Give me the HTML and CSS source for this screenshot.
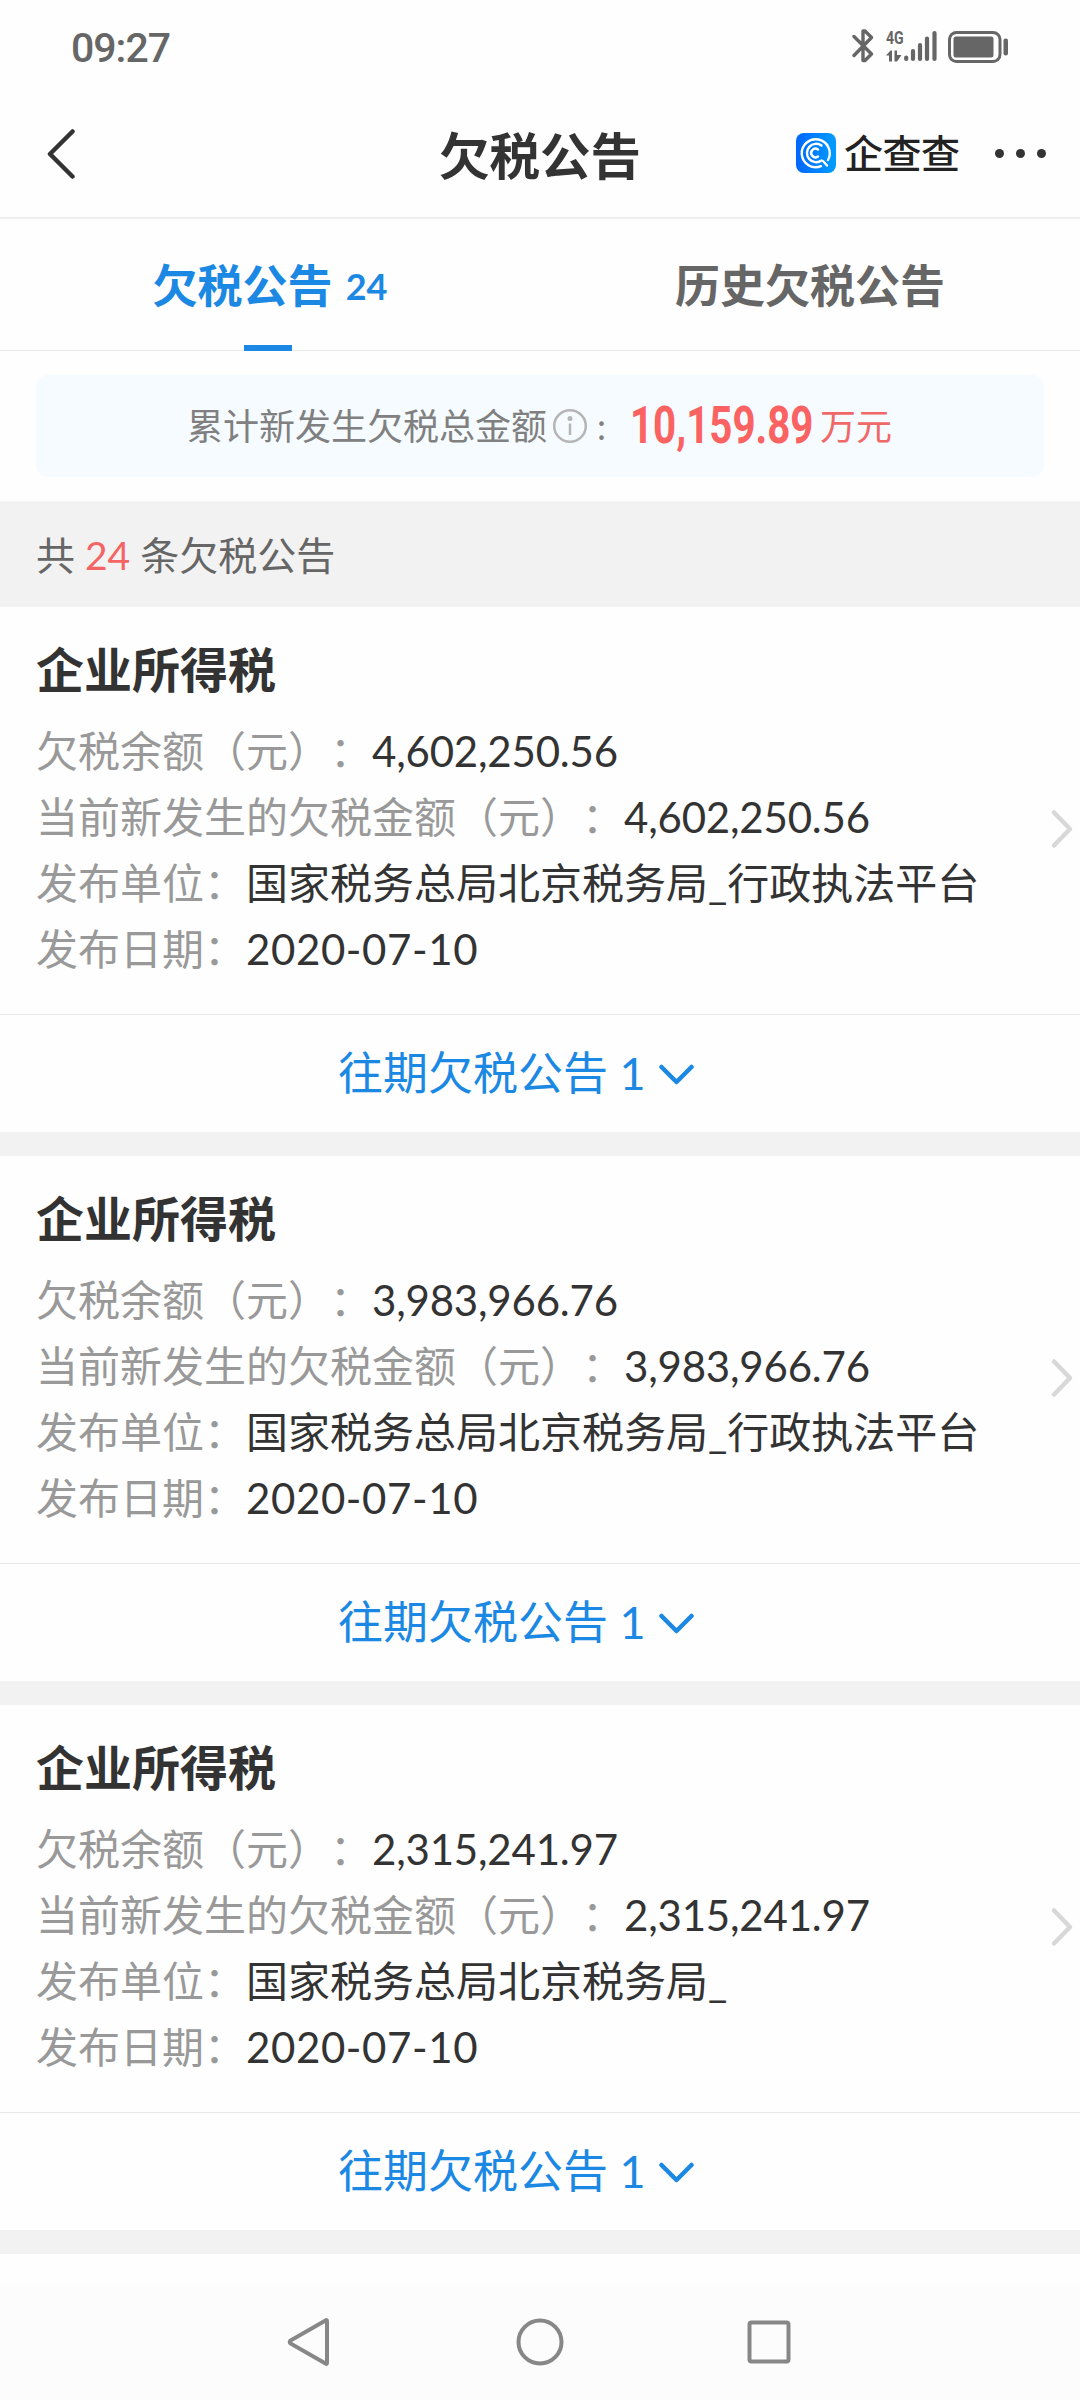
FILE: index.html
```
<!DOCTYPE html>
<html lang="zh-CN">
<head>
  <meta charset="UTF-8" />
  <meta name="viewport" content="width=device-width, initial-scale=1.0" />
  <title>欠税公告</title>
  <link rel="stylesheet" href="styles.css">
</head>
<body>
  <div class="status-bar">
    <span class="time">09:27</span>
    <div class="status-icons">
      <svg class="bluetooth" width="22" height="35" viewBox="0 0 22 35" fill="none" stroke="#666" stroke-width="3.400" stroke-linecap="round" stroke-linejoin="round">
        <path d="M2 8.500L19.500 26L13 32.500H11V21M2 27.500L19.500 9.500L13 3H11V15"/>
      </svg>
      <div class="network">
        <span>4G</span>
        <svg width="16" height="12" viewBox="0 0 16 12" fill="#666">
          <path d="M6 11.500H3V5.500H0L4.500 .5H6zM8.500 .5H11V5H15.500L11 11.500H8.500z"/>
        </svg>
      </div>
      <svg class="signal" width="33" height="34" viewBox="0 0 33 34" stroke="#666" stroke-width="4.200" stroke-linecap="round">
        <path d="M2.200 29.500V31M9 23V31M16 17V31M23 10.500V31M30.500 5V31"/>
      </svg>
      <svg class="battery" width="62" height="35" viewBox="0 0 62 35">
        <rect x="1.500" y="4.500" width="50.500" height="29" rx="7" fill="none" stroke="#666" stroke-width="3"/>
        <rect x="5.500" y="8.500" width="40" height="21" rx="2.500" fill="#666"/>
        <rect x="55.500" y="10.500" width="4.500" height="17" rx="2" fill="#666"/>
      </svg>
    </div>
  </div>

  <header>
    <a class="back" href="#">
      <svg width="30" height="52" viewBox="0 0 30 52" fill="none" stroke="#333" stroke-width="4.500" stroke-linecap="round" stroke-linejoin="round">
        <path d="M27.500 3.500L5 26L27.500 48.500"/>
      </svg>
    </a>
    <h1>欠税公告</h1>
    <div class="brand">
      <svg width="40" height="40" viewBox="0 0 40 40" fill="none" stroke="#fff" stroke-width="2.400" stroke-linecap="round">
        <defs>
          <linearGradient id="logoBg" x1="0" y1="0" x2="1" y2="0">
            <stop offset="0" stop-color="#0066ff"/>
            <stop offset="1" stop-color="#009dff"/>
          </linearGradient>
        </defs>
        <rect width="40" height="40" rx="8" fill="url(#logoBg)" stroke="none"/>
        <path d="M32 27A14 14 0 1 0 25 33.200M27 28L31 32.500"/>
        <path d="M25.500 12.500A9.200 9.200 0 1 0 25.500 27.500"/>
        <path d="M22 16.500A4.300 4.300 0 1 0 22 23.500"/>
      </svg>
      <span class="brand-name">企查查</span>
    </div>
    <div class="dots"><i></i><i></i><i></i></div>
  </header>

  <nav class="tabs">
    <a class="tab active" href="#">欠税公告<small>24</small></a>
    <a class="tab" href="#">历史欠税公告</a>
  </nav>

  <section class="total">
    <span>累计新发生欠税总金额</span>
    <svg class="info" width="36" height="36" viewBox="0 0 36 36" fill="none" stroke="#b5b5b5" stroke-width="2.500">
      <circle cx="18" cy="18" r="15.800"/>
      <path d="M18 15.500V27"/>
      <circle cx="18" cy="10.500" r="2.500" fill="#b5b5b5" stroke="none"/>
    </svg>
    <span class="colon">:</span>
    <strong>10,159.89</strong>
    <span class="unit">万元</span>
  </section>

  <div class="count">共 <b>24</b> 条欠税公告</div>

  <main>
    <article class="card">
      <div class="card-body">
        <div class="info-list">
          <h2>企业所得税</h2>
          <p><span>欠税余额（元）：</span><em>4,602,250.56</em></p>
          <p><span>当前新发生的欠税金额（元）：</span><em>4,602,250.56</em></p>
          <p><span>发布单位：</span>国家税务总局北京税务局_行政执法平台</p>
          <p><span>发布日期：</span><em class="date">2020-07-10</em></p>
        </div>
        <svg class="arrow" width="24" height="40" viewBox="0 0 24 40"><path d="M4 3.500L20 20L4 36.500"/></svg>
      </div>
      <a class="more" href="#">往期欠税公告 1<svg width="36" height="24" viewBox="0 0 36 24"><path d="M2.500 5L17.500 20L32.500 5"/></svg></a>
    </article>

    <article class="card">
      <div class="card-body">
        <div class="info-list">
          <h2>企业所得税</h2>
          <p><span>欠税余额（元）：</span><em>3,983,966.76</em></p>
          <p><span>当前新发生的欠税金额（元）：</span><em>3,983,966.76</em></p>
          <p><span>发布单位：</span>国家税务总局北京税务局_行政执法平台</p>
          <p><span>发布日期：</span><em class="date">2020-07-10</em></p>
        </div>
        <svg class="arrow" width="24" height="40" viewBox="0 0 24 40"><path d="M4 3.500L20 20L4 36.500"/></svg>
      </div>
      <a class="more" href="#">往期欠税公告 1<svg width="36" height="24" viewBox="0 0 36 24"><path d="M2.500 5L17.500 20L32.500 5"/></svg></a>
    </article>

    <article class="card">
      <div class="card-body">
        <div class="info-list">
          <h2>企业所得税</h2>
          <p><span>欠税余额（元）：</span><em>2,315,241.97</em></p>
          <p><span>当前新发生的欠税金额（元）：</span><em>2,315,241.97</em></p>
          <p><span>发布单位：</span>国家税务总局北京税务局_</p>
          <p><span>发布日期：</span><em class="date">2020-07-10</em></p>
        </div>
        <svg class="arrow" width="24" height="40" viewBox="0 0 24 40"><path d="M4 3.500L20 20L4 36.500"/></svg>
      </div>
      <a class="more" href="#">往期欠税公告 1<svg width="36" height="24" viewBox="0 0 36 24"><path d="M2.500 5L17.500 20L32.500 5"/></svg></a>
    </article>
  </main>

  <footer class="system-nav">
    <svg width="50" height="50" viewBox="0 0 50 50"><path d="M41 4V46Q41 47.500 39.500 46.500L4.500 26.500Q3 25 4.500 23.500L39.500 3.500Q41 2.500 41 4z"/></svg>
    <svg width="50" height="50" viewBox="0 0 50 50"><circle cx="25" cy="25" r="21.500"/></svg>
    <svg width="50" height="50" viewBox="0 0 50 50"><rect x="5.500" y="5.500" width="39" height="39" rx="2"/></svg>
  </footer>
</body>
</html>
```

FILE: styles.css
```
* {
  box-sizing: border-box;
}
body {
  margin: 0;
  width: 1080px;
  height: 2400px;
  display: flex;
  flex-direction: column;
  overflow: hidden;
  background: #fefefe;
  color: #333;
  font-family: Lato, 'Noto Sans CJK SC', sans-serif;
  text-spacing-trim: space-all;
}
a {
  color: inherit;
  text-decoration: none;
}
h1, h2, p {
  margin: 0;
}
svg {
  display: block;
  flex: none;
}
.status-bar {
  height: 91px;
  padding: 28px 70px 0 71px;
  display: flex;
  justify-content: space-between;
  align-items: flex-start;
}
.time {
  font-family: Roboto, sans-serif;
  font-size: 41px;
  line-height: 40px;
  font-weight: 500;
  letter-spacing: -1px;
  color: #666;
}
.status-icons {
  display: flex;
}
.network {
  display: flex;
  flex-direction: column;
  justify-content: space-between;
  width: 18px;
  height: 34px;
  margin-left: 12px;
}
.network span {
  font: bold 19px/20px Roboto, sans-serif;
  color: #666;
  transform: scaleX(0.74);
  transform-origin: left;
}
.battery {
  margin-left: 11px;
}
header {
  height: 128px;
  border-bottom: 2px solid #eee;
  display: flex;
  align-items: center;
  padding: 0 34px 0 45px;
}
.back {
  width: 394px;
}
header h1 {
  font-size: 50.5px;
  line-height: 60px;
  font-weight: bold;
  padding-top: 3px;
}
.brand {
  display: flex;
  align-items: center;
  margin-left: 155px;
  margin-bottom: 2px;
}
.brand-name {
  font-size: 39px;
  line-height: 40px;
  font-weight: 500;
  letter-spacing: -0.5px;
  color: #222;
  margin-left: 8px;
}
.dots {
  display: flex;
  gap: 12px;
  margin-left: auto;
  margin-bottom: 2px;
}
.dots i {
  width: 9px;
  height: 9px;
  border-radius: 50%;
  background: #333;
}
.tabs {
  height: 132px;
  border-bottom: 1px solid #e9e9e9;
  display: flex;
}
.tab {
  flex: 1;
  display: flex;
  justify-content: center;
  position: relative;
  font-size: 45px;
  line-height: 134px;
  font-weight: bold;
  color: #666;
}
.tab.active {
  color: #1b88e3;
}
.tab small {
  font-size: 36px;
  margin-left: 13px;
}
.tab.active::after {
  content: '';
  position: absolute;
  left: 244px;
  bottom: -1px;
  width: 48px;
  height: 6px;
  background: #1b88e3;
}
.total {
  margin: 24px 36px;
  height: 102px;
  border-radius: 12px;
  background: #f5fbfe;
  display: flex;
  align-items: center;
  padding-left: 151px;
  font-size: 36px;
  line-height: 102px;
  color: #808080;
}
.total .info {
  margin-left: 5px;
}
.total .colon {
  width: 42px;
  padding-left: 9px;
}
.total strong {
  width: 190px;
  font-family: Roboto, sans-serif;
  font-size: 51px;
  line-height: 98px;
  font-weight: bold;
  color: #fb6262;
  transform: scaleX(0.79);
  transform-origin: left;
}
.total .unit {
  color: #f06868;
}
.count {
  height: 106px;
  padding-left: 36px;
  background: #f2f2f2;
  font-size: 39px;
  line-height: 108px;
  color: #666;
}
.count b {
  font-weight: normal;
  color: #f56464;
}
.card {
  height: 549px;
  border-bottom: 24px solid #f2f2f2;
}
.card-body {
  display: flex;
  justify-content: space-between;
  align-items: center;
  height: 408px;
  padding: 33px 6px 32px 36px;
  border-bottom: 1px solid #e9e9e9;
}
.card h2 {
  font-size: 48px;
  line-height: 60px;
  margin-bottom: 18px;
}
.card p {
  font-size: 42px;
  line-height: 66px;
  white-space: nowrap;
}
.card p span {
  color: #999;
}
.card em {
  font-style: normal;
  letter-spacing: -0.2px;
}
.card em.date {
  letter-spacing: 0.6px;
}
.arrow {
  margin-top: 35px;
  fill: none;
  stroke: #d8d8d8;
  stroke-width: 4.5;
  stroke-linecap: round;
  stroke-linejoin: round;
}
.more {
  display: flex;
  align-items: center;
  height: 117px;
  padding: 0 0 2px 338px;
  font-size: 45px;
  line-height: 60px;
  color: #1b88e3;
  white-space: pre;
}
.more svg {
  margin: 3px 0 0 13px;
  fill: none;
  stroke: #1b88e3;
  stroke-width: 4.5;
  stroke-linecap: round;
  stroke-linejoin: round;
}
.system-nav {
  margin-top: auto;
  height: 116px;
  background: #fcfcfc;
  display: flex;
  justify-content: center;
  align-items: center;
  gap: 179px;
}
.system-nav svg {
  fill: none;
  stroke: #878787;
  stroke-width: 4;
}
```
